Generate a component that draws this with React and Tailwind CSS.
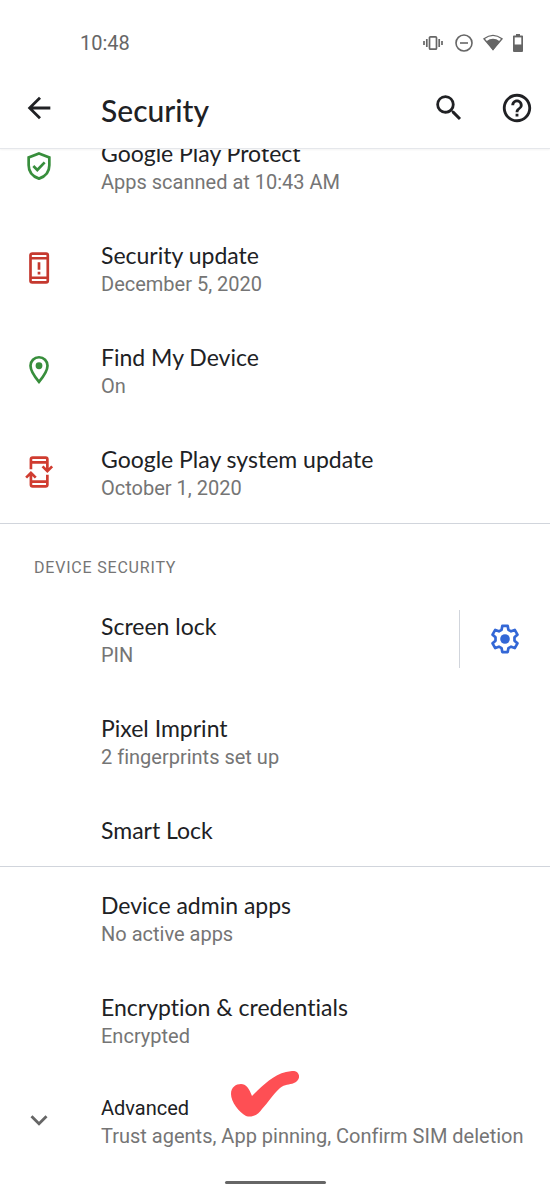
import { MdArrowBack, MdSearch, MdHelpOutline, MdKeyboardArrowDown } from 'react-icons/md';

const statusItems = [
  { title: 'Google Play Protect', summary: 'Apps scanned at 10:43 AM', icon: ShieldIcon },
  { title: 'Security update', summary: 'December 5, 2020', icon: PhoneAlertIcon },
  { title: 'Find My Device', summary: 'On', icon: PinIcon },
  { title: 'Google Play system update', summary: 'October 1, 2020', icon: PhoneSyncIcon },
];

export default function App() {
  return (
    <div className="flex min-h-screen flex-col bg-white font-['Roboto',sans-serif] text-[#202124] [font-variant-ligatures:none]">
      <header className="relative z-10 border-b border-gray-200 bg-white shadow-xs">
        <StatusBar />
        <div className="flex h-20 items-center pl-[22px] pr-4">
          <button type="button" aria-label="Back">
            <MdArrowBack className="size-[34px]" />
          </button>
          <h1 className="ml-[45px] flex-1 pt-1 font-['Lato',sans-serif] text-3xl font-medium leading-8">Security</h1>
          <button type="button" aria-label="Search">
            <MdSearch className="size-[34px]" />
          </button>
          <button type="button" aria-label="Help" className="ml-[34px]">
            <MdHelpOutline className="size-[34px]" />
          </button>
        </div>
      </header>

      <main className="-mt-[34px] flex-1">
        <section className="border-b border-gray-300">
          {statusItems.map((item) => (
            <Row key={item.title} {...item} />
          ))}
        </section>

        <section className="border-b border-gray-300 pb-0.5">
          <h2 className="px-[34px] pb-2 pt-8 text-base leading-6 tracking-wider text-[#757575]">
            DEVICE SECURITY
          </h2>
          <div className="flex items-center">
            <Row title="Screen lock" summary="PIN" />
            <button
              type="button"
              aria-label="Screen lock settings"
              className="flex h-[58px] w-[91px] shrink-0 items-center justify-center border-l border-gray-300"
            >
              <GearIcon />
            </button>
          </div>
          <Row title="Pixel Imprint" summary="2 fingerprints set up" />
          <Row title="Smart Lock" />
        </section>

        <section>
          <Row title="Device admin apps" summary="No active apps" />
          <Row title="Encryption & credentials" summary="Encrypted" />
          <div className="relative">
            <button type="button" className="flex w-full items-center pb-[21px] pl-[22px] pt-[23px] text-left">
              <MdKeyboardArrowDown className="mb-1 size-[34px] shrink-0 text-[#666]" />
              <span className="ml-[45px] flex flex-col">
                <span className="text-xl leading-7">Advanced</span>
                <span className="text-xl leading-7 text-[#757575]">
                  Trust agents, App pinning, Confirm SIM deletion
                </span>
              </span>
            </button>
            <CheckMark />
          </div>
        </section>
      </main>

      <footer className="flex justify-center pb-2 pt-2">
        <div className="h-[3px] w-[101px] rounded-full bg-[#666]" />
      </footer>
    </div>
  );
}

function StatusBar() {
  return (
    <div className="flex h-[68px] items-center justify-between pl-20 pr-[26px] pt-[18px] text-[#666]">
      <span className="text-xl leading-6">10:48</span>
      <div className="flex items-center">
        <svg viewBox="0 0 20 16" className="h-4 w-5" fill="none" stroke="currentColor" strokeWidth="1.7">
          <rect x="6.5" y="1.8" width="7" height="12.400" rx="1" />
          <path d="M3.800 4v8M1 6v4M16.200 4v8M19 6v4" />
        </svg>
        <svg viewBox="0 0 18 18" className="ml-3 size-[18px]" fill="none" stroke="currentColor" strokeWidth="1.6">
          <circle cx="9" cy="9" r="8" />
          <path d="M5 9h8" />
        </svg>
        <svg viewBox="0 0 20 18" className="ml-[10px] h-[18px] w-5">
          <path d="M1 4.800Q10-2 19 4.800L10 15.500Z" fill="none" stroke="currentColor" strokeWidth="1.4" />
          <path d="M3.400 7.200Q10 2.400 16.600 7.200L10 16.500Z" fill="currentColor" />
        </svg>
        <svg viewBox="0 0 12 18" className="ml-[9px] h-[18px] w-3">
          <path d="M4 0h4v1.500h2.200q.8 0 .8.800V17q0 1-1 1H2q-1 0-1-1V2.300q0-.8.800-.8H4z" fill="currentColor" />
          <path d="M2.700 3.400h6.600v7.100H2.700z" fill="white" />
        </svg>
      </div>
    </div>
  );
}

function Row({ title, summary, icon: Icon }) {
  return (
    <button type="button" className="flex w-full items-center pb-[21px] pl-[22px] pt-[25px] text-left">
      <span className="w-[34px] shrink-0">{Icon && <Icon />}</span>
      <span className="ml-[45px] flex flex-col">
        <span className="font-['Lato',sans-serif] text-[23px] leading-[26px]">{title}</span>
        {summary && <span className="mt-0.5 text-xl leading-7 text-[#757575]">{summary}</span>}
      </span>
    </button>
  );
}

function ShieldIcon() {
  return (
    <svg viewBox="0 0 24 24" className="mb-1 size-[34px] text-[#388e3c]" fill="none" stroke="currentColor" strokeWidth="1.9">
      <path d="M12 3.2 19.3 6v5.4c0 4.6-3 8-7.3 9.5-4.3-1.5-7.3-4.9-7.3-9.5V6z" />
      <path d="m8 12 2.8 2.8L16 9.4" />
    </svg>
  );
}

function PhoneAlertIcon() {
  return (
    <svg viewBox="0 0 24 24" className="mb-1 size-[34px] text-[#c5392f]" fill="none" stroke="currentColor" strokeWidth="1.9">
      <rect x="6" y="1.8" width="12.2" height="20.4" rx="1.2" />
      <path d="M6 5.1h12M6 18.9h12M12 8v5.2M12 14.7v1.9" />
    </svg>
  );
}

function PinIcon() {
  return (
    <svg viewBox="0 0 24 24" className="mb-1 size-[34px] text-[#388e3c]" fill="none" stroke="currentColor" strokeWidth="1.9">
      <path d="M12 3c-3.4 0-6 2.6-6 6 0 4.2 6 11.4 6 11.4S18 13.2 18 9c0-3.4-2.6-6-6-6z" />
      <circle cx="12" cy="9" r="2.4" fill="currentColor" stroke="none" />
    </svg>
  );
}

function PhoneSyncIcon() {
  return (
    <svg viewBox="0 0 24 24" className="mb-1 size-[34px] text-[#d03c30]" fill="none" stroke="currentColor" strokeWidth="1.9">
      <path d="M6.3 10V3q0-1.2 1.2-1.200h9.200q1.200 0 1.200 1.200v8.500M6.300 5.200h11.600M14.500 8l3.400 3.400L21.300 8" />
      <path d="M17.900 14v7q0 1.200-1.200 1.200H7.500q-1.200 0-1.200-1.200v-8.500M17.900 18.800H6.300M9.700 16l-3.400-3.400L2.900 16" />
    </svg>
  );
}

function GearIcon() {
  return (
    <svg viewBox="0 0 24 24" className="size-[34px] text-[#3367d6]" fill="none" stroke="currentColor" strokeWidth="1.9" strokeLinejoin="round">
      <path d="M10.1 2.800h3.800l.5 2.700 1.900 1.100 2.600-1 1.900 3.300-2.100 1.800v2.600l2.100 1.800-1.900 3.300-2.600-1-1.900 1.100-.5 2.700h-3.800l-.5-2.700-1.900-1.100-2.600 1-1.900-3.300 2.100-1.800v-2.600L3.200 8.900l1.900-3.300 2.600 1 1.900-1.100z" />
      <circle cx="12" cy="12" r="3.400" fill="currentColor" stroke="none" />
    </svg>
  );
}

function CheckMark() {
  return (
    <svg viewBox="0 0 68 46" className="absolute left-[231px] top-0 h-[46px] w-[68px]" fill="#fe4f54">
      <path d="M0 23C0 16 5 13 10 13c5 0 8 4 11 12C31 15 42 4 55 1l6-1c8-1 10 9 2 12-5 2-9 1-14 5C42 23 37 32 31 38c-4 6-10 9-16 7C8 41 0 31 0 23z" />
    </svg>
  );
}
